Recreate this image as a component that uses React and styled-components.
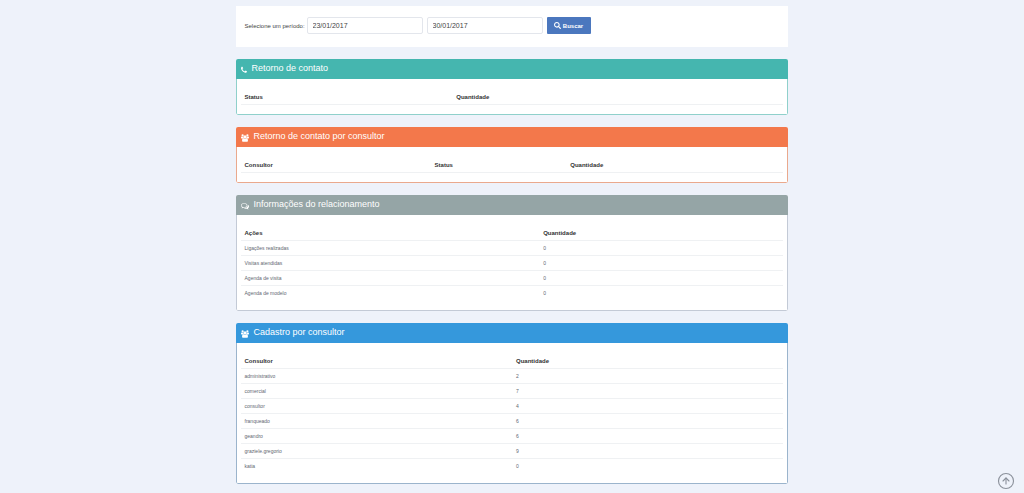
import React from "react";
import styled, { createGlobalStyle } from "styled-components";
import { FaSearch } from "react-icons/fa";
import { CircleArrowUp } from "lucide-react";

const GlobalStyle = createGlobalStyle`
  *, *::before, *::after { box-sizing: border-box; }
  body {
    margin: 0;
    background: #eef2fa;
    color: #5f6872;
    font-family: "Liberation Sans", Arial, sans-serif;
  }
`;

const Page = styled.main`
  display: flex;
  flex-direction: column;
  gap: 12px;
  width: 54%;
  margin: 0 auto;
  padding: 6px 0 9px;
`;

const SearchBar = styled.form`
  display: flex;
  align-items: center;
  gap: 4px;
  padding: 11px 9px 13px;
  background: #fff;
`;

const PeriodLabel = styled.label`
  width: 58px;
  font-size: 6px;
  line-height: 8px;
  white-space: nowrap;
  color: #444;
`;

const DateInput = styled.input`
  width: 116px;
  height: 17px;
  padding: 0 5px;
  border: 1px solid #e3e6ec;
  border-radius: 2px;
  background: #fff;
  color: #444;
  font: 7px/15px "Liberation Sans", Arial, sans-serif;
`;

const SearchButton = styled.button`
  display: flex;
  align-items: center;
  justify-content: center;
  gap: 2px;
  width: 44px;
  height: 17px;
  padding: 0;
  border: 0;
  border-radius: 1px;
  background: #4b77be;
  color: #fff;
  font: bold 6px/8px "Liberation Sans", Arial, sans-serif;
`;

const Panel = styled.section`
  overflow: hidden;
  border-radius: 2px;
  background: #fff;
`;

const PanelHeader = styled.header`
  display: flex;
  align-items: center;
  gap: 5px;
  height: 20px;
  padding: 0 5px 2px;
  background: ${(p) => p.$color};
  color: #fff;
`;

const HeaderIcon = styled.svg`
  height: 8px;
  margin-top: 3px;
  fill: currentColor;
`;

const PanelTitle = styled.h2`
  margin: 0;
  font-size: 9px;
  line-height: 12px;
  font-weight: 400;
`;

const PanelBody = styled.div`
  padding: 10px 4px 9px;
  border: 1px solid ${(p) => p.$edge};
  border-top: 0;
  border-radius: 0 0 2px 2px;
`;

const Table = styled.table`
  width: 100%;
  table-layout: fixed;
  border-collapse: separate;
  border-spacing: 0;
  text-align: left;

  tbody tr:last-child td { border-bottom-color: transparent; }
`;

const HeadCell = styled.th`
  width: ${(p) => p.$width};
  height: 16px;
  padding: 0 4px;
  border-bottom: 1px solid #eff1f3;
  color: #333;
  font-size: 6px;
  line-height: 8px;
`;

const Cell = styled.td`
  height: 15px;
  padding: 0 4px;
  border-bottom: 1px solid #eff1f3;
  font-size: 5px;
  line-height: 8px;
`;

const TopLink = styled.a`
  position: fixed;
  right: 9px;
  bottom: 3px;
  display: flex;
  color: #8b919b;
`;

const icons = {
  phone: {
    viewBox: "0 0 1408 1792",
    width: 6,
    path: "M1408 1240q0 27-10 70.5t-21 68.5q-21 50-122 106-94 51-186 51-27 0-53-3.5t-57.5-12.5-47-14.5-55.5-20.5-49-18q-98-35-175-83-127-79-264-216t-216-264q-48-77-83-175-3-9-18-49t-20.5-55.5-14.5-47-12.5-57.5-3.5-53q0-92 51-186 56-101 106-122 25-11 68.5-21t70.5-10q14 0 21 3 18 6 53 76 11 19 30 54t35 63.5 31 53.5q3 4 17.5 25t21.5 35.5 7 28.5q0 20-28.5 50t-62 55-62 53-28.5 46q0 9 5 22.5t8.5 20.5 14 24 11.5 19q76 137 174 235t235 174q2 1 19 11.5t24 14 20.5 8.5 22.5 5q18 0 46-28.5t53-62 55-62 50-28.5q14 0 28.5 7t35.5 21.5 25 17.5q25 15 53.5 31t63.5 35 54 30q70 35 76 53 3 7 3 21z",
  },
  users: {
    viewBox: "0 0 1920 1792",
    width: 8,
    path: "M593 896q-162 5-265 128h-134q-82 0-138-40.5t-56-118.5q0-353 124-353 6 0 43.5 21t97.5 42.5 119 21.5q67 0 133-23-5 37-5 66 0 139 81 256zm1071 637q0 120-73 189.5t-194 69.5h-874q-121 0-194-69.5t-73-189.5q0-53 3.5-103.5t14-109 26.5-108.5 43-97.5 62-81 85.5-53.5 111.5-20q10 0 43 21.5t73 48 107 48 135 21.5 135-21.5 107-48 73-48 43-21.5q61 0 111.5 20t85.5 53.5 62 81 43 97.5 26.5 108.5 14 109 3.5 103.5zm-1024-1277q0 106-75 181t-181 75-181-75-75-181 75-181 181-75 181 75 75 181zm704 384q0 159-112.5 271.5t-271.5 112.5-271.5-112.5-112.5-271.5 112.5-271.5 271.5-112.5 271.5 112.5 112.5 271.5zm576 225q0 78-56 118.5t-138 40.5h-134q-103-123-265-128 81-117 81-256 0-29-5-66 66 23 133 23 59 0 119-21.5t97.5-42.5 43.5-21q124 0 124 353zm-128-609q0 106-75 181t-181 75-181-75-75-181 75-181 181-75 181 75 75 181z",
  },
  comments: {
    viewBox: "0 0 1792 1792",
    width: 8,
    path: "M704 384q-153 0-286 52t-211.5 141-78.5 191q0 82 53 158t149 132l97 56-35 84q34-20 62-39l44-31 53 10q78 14 153 14 153 0 286-52t211.5-141 78.5-191-78.5-191-211.5-141-286-52zm0-128q191 0 353.5 68.5t256.5 186.5 94 257-94 257-256.5 186.5-353.5 68.5q-86 0-176-16-124 88-278 128-36 9-86 16h-3q-11 0-20.5-8t-11.5-21q-1-3-1-6.5t.5-6.5 2-6l2.5-5 3.5-5.5 4-5 4.5-5 4-4.5q5-6 23-25t26-29.5 22.5-29 25-38.5 20.5-44q-124-72-195-177t-71-224q0-139 94-257t256.5-186.5 353.5-68.5zm822 1169q10 24 20.5 44t25 38.5 22.5 29 26 29.5 23 25q1 1 4 4.5t4.5 5 4 5 3.5 5.5l2.5 5 2 6 .5 6.5-1 6.5q-3 14-13 22t-22 7q-50-7-86-16-154-40-278-128-90 16-176 16-271 0-472-132 58 4 88 4 161 0 309-45t264-129q125-92 192-212t67-254q0-77-23-152 129 71 204 178t75 230q0 120-71 224.5t-195 176.5z",
  },
};

const panels = [
  {
    title: "Retorno de contato",
    icon: icons.phone,
    color: "#45b6af",
    edge: "#8fd0cb",
    columns: [["Status", "39%"], ["Quantidade"]],
    rows: [],
  },
  {
    title: "Retorno de contato por consultor",
    icon: icons.users,
    color: "#f3784b",
    edge: "#eaa98d",
    columns: [["Consultor", "35%"], ["Status", "25%"], ["Quantidade"]],
    rows: [],
  },
  {
    title: "Informações do relacionamento",
    icon: icons.comments,
    color: "#95a5a6",
    edge: "#c3cad6",
    columns: [["Ações", "55%"], ["Quantidade"]],
    rows: [
      ["Ligações realizadas", "0"],
      ["Visitas atendidas", "0"],
      ["Agenda de visita", "0"],
      ["Agenda de modelo", "0"],
    ],
  },
  {
    title: "Cadastro por consultor",
    icon: icons.users,
    color: "#3598dc",
    edge: "#9bb4cc",
    columns: [["Consultor", "50%"], ["Quantidade"]],
    rows: [
      ["administrativo", "2"],
      ["comercial", "7"],
      ["consultor", "4"],
      ["franqueado", "6"],
      ["geandro", "6"],
      ["graziele.gregorio", "9"],
      ["katia", "0"],
    ],
  },
];

function ReportPanel({ title, icon, color, edge, columns, rows }) {
  return (
    <Panel>
      <PanelHeader $color={color}>
        <HeaderIcon viewBox={icon.viewBox} width={icon.width} aria-hidden="true">
          <path d={icon.path} />
        </HeaderIcon>
        <PanelTitle>{title}</PanelTitle>
      </PanelHeader>
      <PanelBody $edge={edge}>
        <Table aria-label={title}>
          <thead>
            <tr>
              {columns.map(([name, width]) => (
                <HeadCell key={name} scope="col" $width={width || "auto"}>
                  {name}
                </HeadCell>
              ))}
            </tr>
          </thead>
          <tbody>
            {rows.map((row) => (
              <tr key={row[0]}>
                {row.map((value, i) => (
                  <Cell key={i}>{value}</Cell>
                ))}
              </tr>
            ))}
          </tbody>
        </Table>
      </PanelBody>
    </Panel>
  );
}

export default function App() {
  return (
    <>
      <GlobalStyle />
      <Page>
        <SearchBar onSubmit={(e) => e.preventDefault()}>
          <PeriodLabel htmlFor="start">Selecione um período:</PeriodLabel>
          <DateInput id="start" defaultValue="23/01/2017" />
          <DateInput id="end" aria-label="Data final" defaultValue="30/01/2017" />
          <SearchButton type="submit">
            <FaSearch size={7} aria-hidden="true" />
            Buscar
          </SearchButton>
        </SearchBar>
        {panels.map((panel) => (
          <ReportPanel key={panel.title} {...panel} />
        ))}
      </Page>
      <TopLink href="#root" aria-label="Voltar ao topo">
        <CircleArrowUp size={18} strokeWidth={1.5} />
      </TopLink>
    </>
  );
}
